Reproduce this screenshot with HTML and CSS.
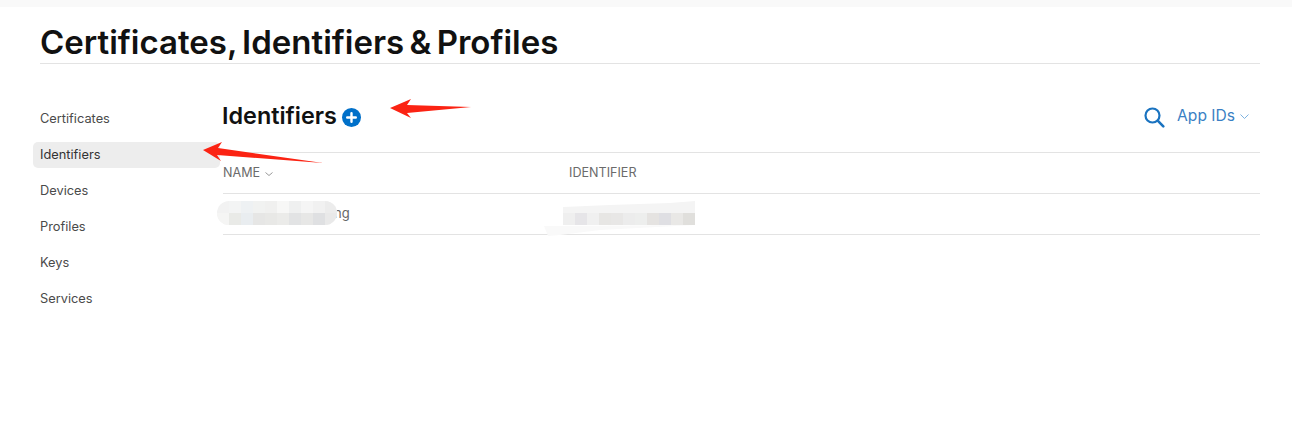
FILE: index.html
```html
<!DOCTYPE html>
<html lang="en">
<head>
  <meta charset="UTF-8">
  <title>Certificates, Identifiers &amp; Profiles</title>
  <link rel="stylesheet" href="styles.css">
</head>
<body>

<div class="topbar"></div>

<div class="page">
  <h1 class="page-title">Certificates, Identifiers &amp; Profiles</h1>

  <div class="layout">
    <nav class="sidebar">
      <a class="nav-item">Certificates</a>
      <a class="nav-item active">Identifiers</a>
      <a class="nav-item">Devices</a>
      <a class="nav-item">Profiles</a>
      <a class="nav-item">Keys</a>
      <a class="nav-item">Services</a>
    </nav>

    <main class="content">
      <div class="content-head">
        <h2 class="content-title">Identifiers</h2>
        <svg class="add-btn" width="19" height="19" viewBox="0 0 19 19">
          <circle cx="9.5" cy="9.5" r="9.5" fill="#0070c9"/>
          <path d="M9.5 5.2v8.6M5.2 9.5h8.6" stroke="#fff" stroke-width="2.4" stroke-linecap="round"/>
        </svg>
        <div class="head-tools">
          <svg class="search-icon" width="21" height="21" viewBox="0 0 21 21" fill="none">
            <circle cx="8.5" cy="8.5" r="7" stroke="#1a73c0" stroke-width="2.2"/>
            <path d="M13.7 13.7l5.6 5.6" stroke="#1a73c0" stroke-width="2.6" stroke-linecap="round"/>
          </svg>
          <span class="filter">App IDs</span>
          <svg class="chevron" width="9" height="5" viewBox="0 0 9 5" fill="none">
            <path d="M.5.5l4 4 4-4" stroke="#7db2e0" stroke-width="1"/>
          </svg>
        </div>
      </div>

      <div class="row table-head">
        <div class="col-name">NAME
          <svg class="sort" width="8" height="4" viewBox="0 0 8 4" fill="none">
            <path d="M.5.5L4 3.5 7.5.5" stroke="#999" stroke-width="1"/>
          </svg>
        </div>
        <div class="col-id">IDENTIFIER</div>
      </div>
      <div class="row table-row">
        <div class="col-name name-value">ng</div>
        <div class="col-id"></div>
      </div>
    </main>
  </div>
</div>

<!-- mosaics and arrows were painted on top of the screenshot -->
<svg class="overlay" width="1292" height="432" viewBox="0 0 1292 432">
  <clipPath id="nameClip"><rect x="217" y="201" width="120" height="24" rx="12"/></clipPath>
  <g clip-path="url(#nameClip)">
    <rect x="217" y="201" width="120" height="24" fill="#f2f2f2"/>
    <rect x="229" y="201" width="12" height="12" fill="#f3f4f4"/>
    <rect x="241" y="201" width="12" height="12" fill="#eef1f3"/>
    <rect x="253" y="201" width="12" height="12" fill="#f1f2f1"/>
    <rect x="265" y="201" width="12" height="12" fill="#f0f0ef"/>
    <rect x="277" y="201" width="12" height="12" fill="#f7f7f6"/>
    <rect x="289" y="201" width="12" height="12" fill="#eff0f0"/>
    <rect x="301" y="201" width="12" height="12" fill="#f5f5f5"/>
    <rect x="313" y="201" width="12" height="12" fill="#f1f1f1"/>
    <rect x="325" y="201" width="12" height="12" fill="#ececec"/>
    <rect x="217" y="213" width="12" height="12" fill="#f5f5f4"/>
    <rect x="229" y="213" width="12" height="12" fill="#e9eae7"/>
    <rect x="241" y="213" width="12" height="12" fill="#e9edf0"/>
    <rect x="253" y="213" width="12" height="12" fill="#e6e6e5"/>
    <rect x="265" y="213" width="12" height="12" fill="#e8e8e6"/>
    <rect x="277" y="213" width="12" height="12" fill="#ebebe9"/>
    <rect x="289" y="213" width="12" height="12" fill="#e2e3e4"/>
    <rect x="301" y="213" width="12" height="12" fill="#e7e7e6"/>
    <rect x="313" y="213" width="12" height="12" fill="#dfe0e2"/>
    <rect x="325" y="213" width="12" height="12" fill="#e9e9e9"/>
  </g>

  <polygon points="563,207 610,205 670,203 695,201 695,213 563,213" fill="#f4f4f4"/>
  <polygon points="544,226 695,225 600,230 560,235 548,236" fill="#f9f9f9"/>
  <rect x="563" y="213" width="12" height="12" fill="#efefef"/>
  <rect x="575" y="213" width="12" height="12" fill="#e6e5e8"/>
  <rect x="587" y="213" width="12" height="12" fill="#f0f0f0"/>
  <rect x="599" y="213" width="12" height="12" fill="#e7e6e4"/>
  <rect x="611" y="213" width="12" height="12" fill="#e8e7e6"/>
  <rect x="623" y="213" width="12" height="12" fill="#ececec"/>
  <rect x="635" y="213" width="12" height="12" fill="#edeeed"/>
  <rect x="647" y="213" width="12" height="12" fill="#e5e3e1"/>
  <rect x="659" y="213" width="12" height="12" fill="#dfdfe3"/>
  <rect x="671" y="213" width="12" height="12" fill="#e9e8e6"/>
  <rect x="683" y="213" width="12" height="12" fill="#e0dfdc"/>

  <polygon points="390,108 411,99 407,105 471,107 407,113 411,118" fill="#fb2313"/>
  <polygon points="203,150 222,142 218,148 323,163 217,155 221,161" fill="#fb2313"/>
</svg>

</body>
</html>
```

FILE: styles.css
```css
body {
  font-family: 'Inter', 'Liberation Sans', sans-serif;
  background: #fff;
  color: #333;
  margin: 0;
}

.topbar {
  height: 7px;
  background: #f9f9f9;
}

.page {
  padding: 0 32px 0 40px;
}

.page-title {
  font-size: 33px;
  font-weight: 600;
  line-height: 40px;
  word-spacing: -3px;
  color: #111;
  margin: 0;
  padding-top: 15px;
  height: 41px;
  border-bottom: 1px solid #e3e3e3;
}

.layout {
  display: flex;
  padding-top: 36px;
}

.sidebar {
  width: 183px;
  flex-shrink: 0;
  display: flex;
  flex-direction: column;
  gap: 10px;
  padding-top: 6px;
}

.nav-item {
  font-size: 12.8px;
  line-height: 25px;
  height: 26px;
  color: #4a4a4a;
  margin-left: -7px;
  margin-right: 3px;
  padding-left: 7px;
  border-radius: 5px;
}

.nav-item.active {
  background: #ededed;
  color: #333;
}

.content {
  flex: 1;
}

.content-head {
  display: flex;
  align-items: center;
  height: 52px;
  border-bottom: 1px solid #e3e3e3;
}

.content-title {
  font-size: 23.4px;
  font-weight: 600;
  color: #111;
  margin: 0 0 0 -1px;
  line-height: 34px;
  margin-top: -20px;
}

.add-btn {
  margin-left: 5px;
  margin-top: -17px;
}

.head-tools {
  margin-left: auto;
  margin-right: 11px;
  margin-top: -22px;
  display: flex;
  align-items: center;
}

.search-icon {
  margin-right: 12px;
  margin-top: 5px;
}

.filter {
  font-size: 15.6px;
  color: #3a7fc4;
}

.chevron {
  margin-left: 5px;
  margin-top: 2px;
}

.row {
  display: flex;
  align-items: center;
  height: 40px;
  border-bottom: 1px solid #e3e3e3;
  font-size: 13px;
}

.col-name {
  width: 346px;
}

.table-head {
  font-size: 12.6px;
  line-height: 14px;
  color: #6b6b6b;
  padding-bottom: 1px;
  height: 39px;
}

.sort {
  margin-left: 1px;
  vertical-align: 1px;
}

.name-value {
  padding-left: 111px;
  padding-bottom: 2px;
  box-sizing: border-box;
  color: #666;
}

.overlay {
  position: absolute;
  top: 0;
  left: 0;
  pointer-events: none;
}
```
